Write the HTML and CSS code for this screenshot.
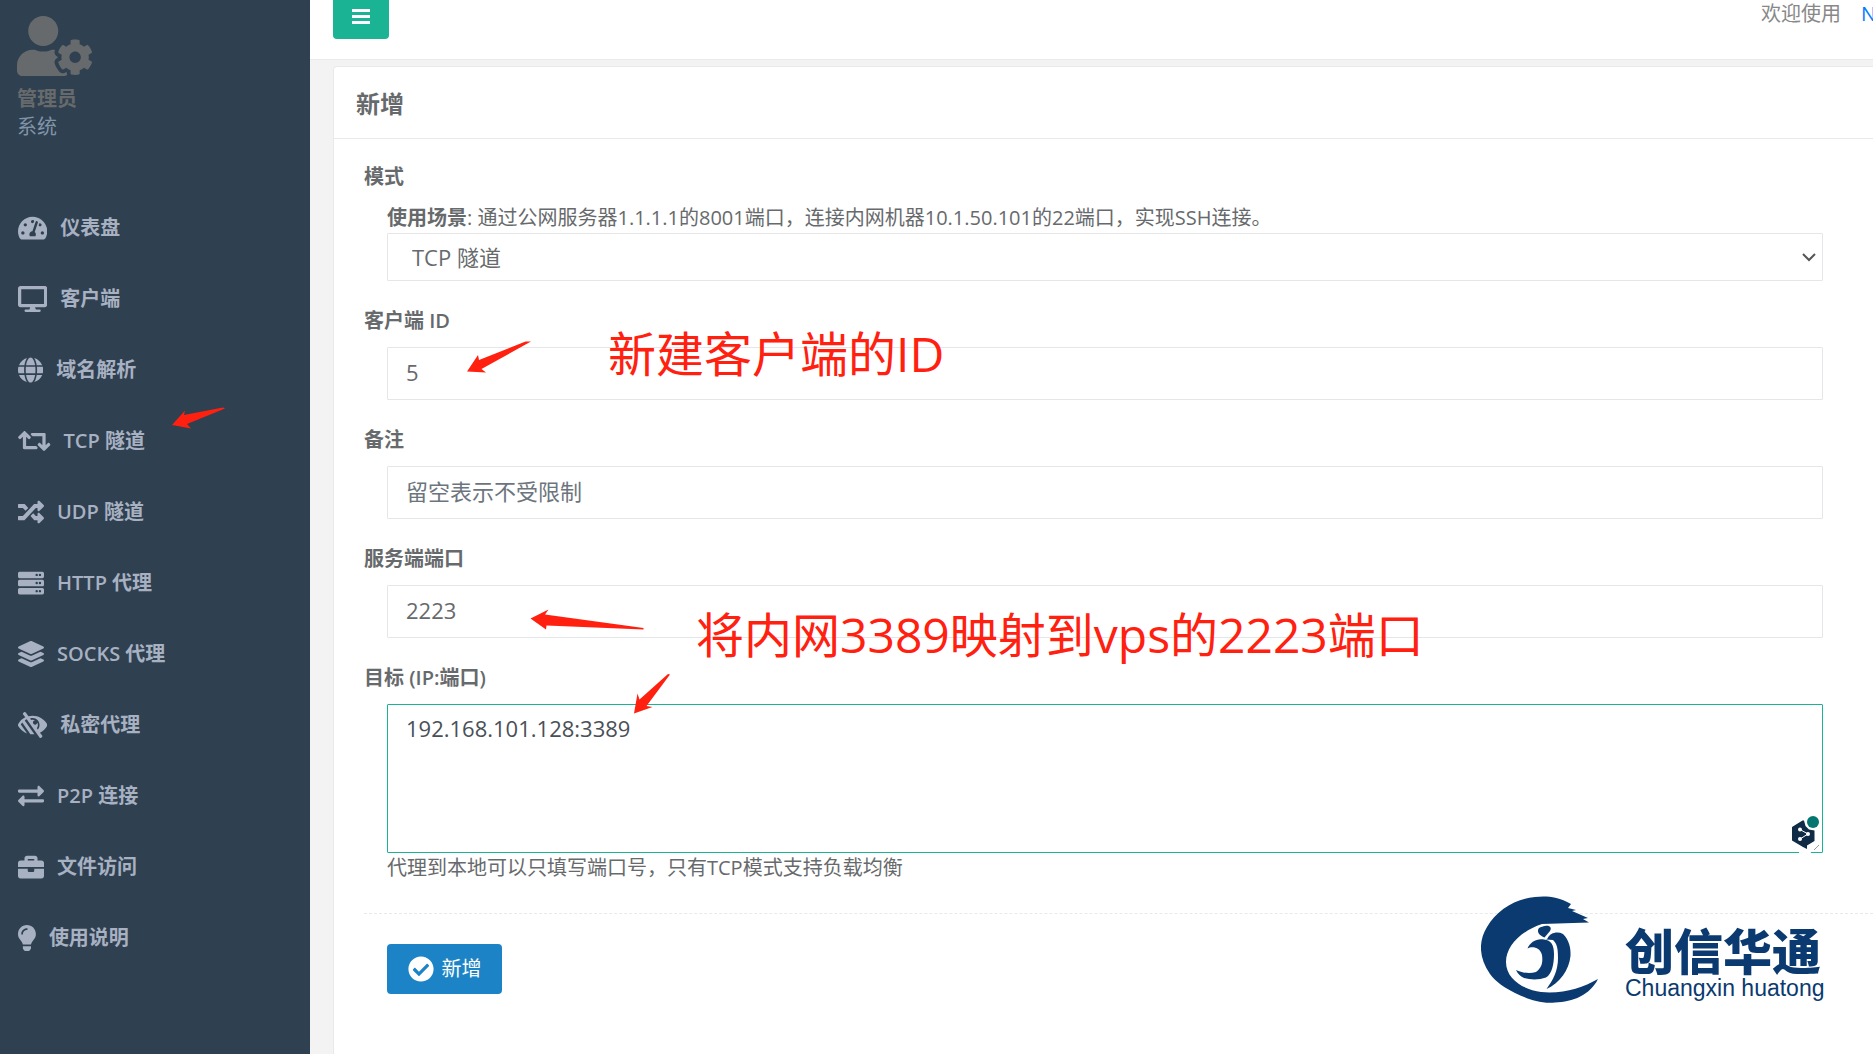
FILE: index.html
```html
<!DOCTYPE html>
<html lang="zh-CN">
<head>
<meta charset="utf-8">
<title>新增</title>
<link rel="stylesheet" href="styles.css">
</head>
<body>
<div class="layout">
  <nav class="sidebar">
    <header class="profile">
      <svg class="avatar" viewBox="0 0 640 512"><path d="M610.5 373.3c2.6-14.1 2.6-28.5 0-42.6l25.8-14.9c3-1.7 4.3-5.2 3.3-8.5-6.7-21.6-18.2-41.2-33.2-57.4-2.3-2.5-6-3.1-9-1.4l-25.8 14.9c-10.9-9.3-23.4-16.5-36.9-21.3v-29.8c0-3.4-2.4-6.4-5.7-7.1-22.3-5-45-4.8-66.2 0-3.3.7-5.7 3.7-5.7 7.1v29.8c-13.5 4.8-26 12-36.9 21.3l-25.8-14.9c-2.9-1.7-6.7-1.1-9 1.4-15 16.2-26.5 35.8-33.2 57.4-1 3.3.4 6.8 3.3 8.5l25.8 14.9c-2.6 14.1-2.6 28.5 0 42.6l-25.8 14.9c-3 1.7-4.3 5.2-3.3 8.5 6.7 21.6 18.2 41.1 33.2 57.4 2.3 2.5 6 3.1 9 1.4l25.8-14.9c10.9 9.3 23.4 16.5 36.9 21.3v29.8c0 3.4 2.4 6.4 5.7 7.1 22.3 5 45 4.8 66.2 0 3.3-.7 5.7-3.7 5.7-7.1v-29.8c13.5-4.8 26-12 36.9-21.3l25.8 14.9c2.9 1.7 6.7 1.1 9-1.4 15-16.2 26.5-35.8 33.2-57.4 1-3.3-.4-6.8-3.3-8.5l-25.8-14.9zM496 400.5c-26.8 0-48.5-21.8-48.5-48.5s21.8-48.5 48.5-48.5 48.5 21.8 48.5 48.5-21.7 48.5-48.5 48.5zM224 256c70.7 0 128-57.3 128-128S294.7 0 224 0 96 57.3 96 128s57.3 128 128 128zm201.2 226.5c-2.3-1.2-4.6-2.6-6.8-3.9l-7.9 4.6c-6 3.4-12.8 5.3-19.6 5.3-10.9 0-21.4-4.6-28.9-12.6-18.3-19.8-32.3-43.9-40.2-69.6-5.5-17.7 1.9-36.4 17.9-45.7l7.9-4.6c-.1-2.6-.1-5.2 0-7.8l-7.9-4.6c-16-9.2-23.4-28-17.9-45.7.9-2.9 2.2-5.8 3.2-8.7-3.8-.3-7.5-1.2-11.4-1.2h-16.7c-22.2 10.2-46.9 16-72.9 16s-50.6-5.8-72.9-16h-16.7C60.2 288 0 348.2 0 422.4V464c0 26.5 21.5 48 48 48h352c10.1 0 19.5-3.2 27.2-8.5-1.2-3.8-2-7.7-2-11.8v-9.2z"/></svg>
      <strong class="profile-name">管理员</strong>
      <span class="profile-role">系统</span>
    </header>
    <ul class="menu">
      <li><a href="#"><svg class="icon" viewBox="0 0 576 512"><path d="M288 32C128.94 32 0 160.94 0 320c0 52.8 14.25 102.26 39.06 144.8 5.61 9.62 16.3 15.2 27.44 15.2h443c11.14 0 21.83-5.58 27.44-15.2C561.75 422.26 576 372.8 576 320c0-159.06-128.94-288-288-288zm0 64c14.71 0 26.58 10.13 30.32 23.65-1.11 2.26-2.64 4.23-3.45 6.67l-9.22 27.67c-5.13 3.49-10.97 6.01-17.64 6.01-17.67 0-32-14.33-32-32S270.33 96 288 96zM96 384c-17.67 0-32-14.33-32-32s14.33-32 32-32 32 14.33 32 32-14.33 32-32 32zm48-160c-17.67 0-32-14.33-32-32s14.33-32 32-32 32 14.33 32 32-14.33 32-32 32zm246.77-72.41l-61.33 184C343.13 347.33 352 364.54 352 384c0 11.72-3.38 22.55-8.88 32H232.88c-5.5-9.45-8.88-20.28-8.88-32 0-33.94 26.5-61.43 59.9-63.59l61.34-184.01c4.17-12.56 17.73-19.45 30.36-15.17 12.57 4.19 19.35 17.79 15.17 30.36zm14.66 57.2l15.52-46.55c3.47-1.29 7.13-2.23 11.05-2.23 17.67 0 32 14.33 32 32s-14.33 32-32 32c-11.38-.01-20.89-6.28-26.57-15.22zM480 384c-17.67 0-32-14.33-32-32s14.33-32 32-32 32 14.33 32 32-14.33 32-32 32z"/></svg><span>仪表盘</span></a></li>
      <li><a href="#"><svg class="icon" viewBox="0 0 576 512"><path d="M528 0H48C21.5 0 0 21.5 0 48v320c0 26.5 21.5 48 48 48h192l-16 48h-72c-13.3 0-24 10.7-24 24s10.7 24 24 24h272c13.3 0 24-10.7 24-24s-10.7-24-24-24h-72l-16-48h192c26.5 0 48-21.5 48-48V48c0-26.5-21.5-48-48-48zm-16 352H64V64h448v288z"/></svg><span>客户端</span></a></li>
      <li><a href="#"><svg class="icon" viewBox="0 0 496 512"><path d="M336.5 160C322 70.7 287.8 8 248 8s-74 62.7-88.5 152h177zM152 256c0 22.2 1.2 43.5 3.3 64h185.3c2.1-20.5 3.3-41.8 3.3-64s-1.2-43.5-3.3-64H155.3c-2.1 20.5-3.3 41.8-3.3 64zm324.7-96c-28.6-67.9-86.5-120.4-158-141.6 24.4 33.8 41.2 84.7 50 141.6h108zM177.2 18.4C105.8 39.6 47.8 92.1 19.3 160h108c8.7-56.9 25.5-107.8 49.9-141.6zM487.4 192H372.7c2.1 21 3.3 42.5 3.3 64s-1.2 43-3.3 64h114.6c5.5-20.5 8.6-41.8 8.6-64s-3.1-43.5-8.5-64zM120 256c0-21.5 1.2-43 3.3-64H8.6C3.2 212.5 0 233.8 0 256s3.2 43.5 8.6 64h114.6c-2-21-3.2-42.5-3.2-64zm39.5 96c14.5 89.3 48.7 152 88.5 152s74-62.7 88.5-152h-177zm159.3 141.6c71.4-21.2 129.4-73.7 158-141.6h-108c-8.8 56.9-25.6 107.8-50 141.6zM19.3 352c28.6 67.9 86.5 120.4 158 141.6-24.4-33.8-41.2-84.7-50-141.6h-108z"/></svg><span>域名解析</span></a></li>
      <li><a href="#"><svg class="icon" viewBox="0 0 640 512"><path d="M629.657 343.598L528.971 444.284c-9.373 9.372-24.568 9.372-33.941 0L394.343 343.598c-9.373-9.373-9.373-24.569 0-33.941l10.823-10.823c9.562-9.562 25.133-9.34 34.419.492L480 342.118V160H292.451a24.005 24.005 0 0 1-16.971-7.029l-16-16C244.361 121.851 255.069 96 276.451 96H520c13.255 0 24 10.745 24 24v222.118l40.416-42.792c9.285-9.831 24.856-10.054 34.419-.492l10.823 10.823c9.372 9.372 9.372 24.569-.001 33.941zm-265.138 15.431A23.999 23.999 0 0 0 347.548 352H160V169.881l40.416 42.792c9.286 9.831 24.856 10.054 34.419.491l10.822-10.822c9.373-9.373 9.373-24.569 0-33.941L144.971 67.716c-9.373-9.373-24.569-9.373-33.941 0L10.343 168.402c-9.373 9.373-9.373 24.569 0 33.941l10.822 10.822c9.562 9.562 25.133 9.34 34.419-.491L96 169.881V392c0 13.255 10.745 24 24 24h243.549c21.382 0 32.09-25.851 16.971-40.971l-16.001-16z"/></svg><span>TCP 隧道</span></a></li>
      <li><a href="#"><svg class="icon" viewBox="0 0 512 512"><path d="M504.971 359.029c9.373 9.373 9.373 24.569 0 33.941l-80 79.984c-15.01 15.01-40.971 4.49-40.971-16.971V416h-58.785a12.004 12.004 0 0 1-8.773-3.812l-70.556-75.596 53.333-57.143L352 336h32v-39.981c0-21.438 25.943-31.998 40.971-16.971l80 79.981zM12 176h84l52.781 56.551 53.333-57.143-70.556-75.596A11.999 11.999 0 0 0 122.785 96H12c-6.627 0-12 5.373-12 12v56c0 6.627 5.373 12 12 12zm372 0v39.984c0 21.46 25.961 31.98 40.971 16.971l80-79.984c9.373-9.373 9.373-24.569 0-33.941l-80-79.981C409.943 24.021 384 34.582 384 56.019V96h-58.785a12.004 12.004 0 0 0-8.773 3.812L96 336H12c-6.627 0-12 5.373-12 12v56c0 6.627 5.373 12 12 12h110.785c3.326 0 6.503-1.381 8.773-3.812L352 176h32z"/></svg><span>UDP 隧道</span></a></li>
      <li><a href="#"><svg class="icon" viewBox="0 0 512 512"><path fill-rule="evenodd" d="M480 160H32c-17.673 0-32-14.327-32-32V64c0-17.673 14.327-32 32-32h448c17.673 0 32 14.327 32 32v64c0 17.673-14.327 32-32 32zm-48-88a24 24 0 1 0 0 48a24 24 0 1 0 0-48zm-64 0a24 24 0 1 0 0 48a24 24 0 1 0 0-48zM480 320H32c-17.673 0-32-14.327-32-32v-64c0-17.673 14.327-32 32-32h448c17.673 0 32 14.327 32 32v64c0 17.673-14.327 32-32 32zm-48-88a24 24 0 1 0 0 48a24 24 0 1 0 0-48zm-64 0a24 24 0 1 0 0 48a24 24 0 1 0 0-48zM480 480H32c-17.673 0-32-14.327-32-32v-64c0-17.673 14.327-32 32-32h448c17.673 0 32 14.327 32 32v64c0 17.673-14.327 32-32 32zm-48-88a24 24 0 1 0 0 48a24 24 0 1 0 0-48zm-64 0a24 24 0 1 0 0 48a24 24 0 1 0 0-48z"/></svg><span>HTTP 代理</span></a></li>
      <li><a href="#"><svg class="icon" viewBox="0 0 512 512"><path d="M12.41 148.02l232.94 105.67c6.8 3.09 14.49 3.09 21.29 0l232.94-105.67c16.55-7.51 16.55-32.52 0-40.03L266.65 2.31a25.607 25.607 0 0 0-21.29 0L12.41 107.98c-16.55 7.51-16.55 32.53 0 40.04zm487.18 88.28l-58.09-26.33-161.64 73.27c-7.56 3.43-15.59 5.17-23.86 5.17s-16.29-1.74-23.86-5.17L70.51 209.97l-58.1 26.33c-16.55 7.5-16.55 32.5 0 40l232.94 105.59c6.8 3.08 14.49 3.08 21.29 0L499.59 276.3c16.55-7.5 16.55-32.5 0-40zm0 127.8l-57.87-26.23-161.86 73.37c-7.56 3.43-15.59 5.17-23.86 5.17s-16.29-1.74-23.86-5.17L70.29 337.87 12.41 364.1c-16.55 7.5-16.55 32.5 0 40l232.94 105.59c6.8 3.08 14.49 3.08 21.29 0L499.59 404.1c16.55-7.5 16.55-32.5 0-40z"/></svg><span>SOCKS 代理</span></a></li>
      <li><a href="#"><svg class="icon" viewBox="0 0 576 512"><path d="M569.344 231.631C512.96 135.949 407.81 72 288 72c-28.468 0-56.102 3.619-82.451 10.415L152.778 10.24c-7.601-10.858-22.564-13.5-33.423-5.9l-13.114 9.178c-10.86 7.601-13.502 22.566-5.9 33.426l43.131 58.395C89.449 131.73 40.228 174.683 6.682 231.581c-.01.017-.023.033-.034.05-8.765 14.875-8.964 33.528 0 48.739 38.5 65.332 99.742 115.862 172.859 141.349L55.316 244.302A272.194 272.194 0 0 1 83.61 208.39l119.4 170.58h.01l40.63 58.04a330.055 330.055 0 0 0 78.94 1.17l-189.98-271.4a277.628 277.628 0 0 1 38.777-21.563l251.836 356.544c7.601 10.858 22.564 13.499 33.423 5.9l13.114-9.178c10.86-7.601 13.502-22.567 5.9-33.426l-43.12-58.377-.007-.009c57.161-27.978 104.835-72.04 136.81-126.301a47.938 47.938 0 0 0 .001-48.739zM390.026 345.94l-19.066-27.23c24.682-32.567 27.711-76.353 8.8-111.68v.03c0 23.65-19.17 42.82-42.82 42.82-23.828 0-42.82-19.349-42.82-42.82 0-23.65 19.17-42.82 42.82-42.82h.03c-24.75-13.249-53.522-15.643-79.51-7.68l-19.068-27.237C253.758 123.306 270.488 120 288 120c75.162 0 136 60.826 136 136 0 34.504-12.833 65.975-33.974 89.94z"/></svg><span>私密代理</span></a></li>
      <li><a href="#"><svg class="icon" viewBox="0 0 512 512"><path d="M0 168v-16c0-13.255 10.745-24 24-24h360V80c0-21.367 25.899-32.042 40.971-16.971l80 80c9.372 9.373 9.372 24.569 0 33.941l-80 80C409.956 271.982 384 261.456 384 240v-48H24c-13.255 0-24-10.745-24-24zm488 152H128v-48c0-21.314-25.862-32.08-40.971-16.971l-80 80c-9.372 9.373-9.372 24.569 0 33.941l80 80C102.057 463.997 128 453.437 128 432v-48h360c13.255 0 24-10.745 24-24v-16c0-13.255-10.745-24-24-24z"/></svg><span>P2P 连接</span></a></li>
      <li><a href="#"><svg class="icon" viewBox="0 0 512 512"><path d="M320 336c0 8.84-7.16 16-16 16h-96c-8.84 0-16-7.16-16-16v-48H0v144c0 25.6 22.4 48 48 48h416c25.6 0 48-22.4 48-48V288H320v48zm144-208h-80V80c0-25.6-22.4-48-48-48H176c-25.6 0-48 22.4-48 48v48H48c-25.6 0-48 22.4-48 48v80h512v-80c0-25.6-22.4-48-48-48zm-144 0H192V96h128v32z"/></svg><span>文件访问</span></a></li>
      <li><a href="#"><svg class="icon" viewBox="0 0 352 512"><path d="M96.06 454.35c.01 6.29 1.87 12.45 5.36 17.69l17.09 25.69a31.99 31.99 0 0 0 26.64 14.28h61.71a31.99 31.99 0 0 0 26.64-14.28l17.09-25.69a31.989 31.989 0 0 0 5.36-17.69l.04-38.35H96.01l.05 38.35zM0 176c0 44.37 16.45 84.85 43.56 115.78 16.52 18.85 42.36 58.23 52.21 91.45.04.26.07.52.11.78h160.24c.04-.26.07-.51.11-.78 9.85-33.22 35.69-72.6 52.21-91.45C335.55 260.85 352 220.37 352 176 352 78.61 272.91-.3 175.45 0 73.44.31 0 82.97 0 176zm176-80c-44.11 0-80 35.89-80 80 0 8.84-7.16 16-16 16s-16-7.16-16-16c0-61.76 50.24-112 112-112 8.84 0 16 7.16 16 16s-7.16 16-16 16z"/></svg><span>使用说明</span></a></li>
    </ul>
  </nav>

  <main class="page">
    <div class="topbar">
      <button class="toggle" type="button" aria-label="菜单"><svg class="bars" viewBox="0 0 18 18"><path d="M0 1h18v3H0zM0 7h18v3H0zM0 13h18v3H0z"/></svg></button>
      <div class="welcome"><span>欢迎使用</span><a href="#">N</a></div>
    </div>

    <section class="card">
      <h1 class="card-title">新增</h1>
      <form class="form">
        <div class="group">
          <label for="mode">模式</label>
          <div class="field">
            <p class="hint"><b>使用场景</b>: 通过公网服务器1.1.1.1的8001端口，连接内网机器10.1.50.101的22端口，实现SSH连接。</p>
            <div class="select-wrap">
              <select id="mode" class="control select"><option>TCP 隧道</option></select>
              <svg class="chevron" viewBox="0 0 14 9"><path d="M1 1l6 6 6-6"/></svg>
            </div>
          </div>
        </div>
        <div class="group">
          <label for="client">客户端 ID</label>
          <div class="field"><input id="client" class="control" type="text" value="5"></div>
        </div>
        <div class="group">
          <label for="remark">备注</label>
          <div class="field"><input id="remark" class="control" type="text" placeholder="留空表示不受限制"></div>
        </div>
        <div class="group">
          <label for="port">服务端端口</label>
          <div class="field"><input id="port" class="control" type="text" value="2223"></div>
        </div>
        <div class="group">
          <label for="target">目标 (IP:端口)</label>
          <div class="field">
            <div class="area-wrap">
              <textarea id="target" class="control area">192.168.101.128:3389</textarea>
              <svg class="helper" viewBox="0 0 32 38"><ellipse class="halo" cx="17" cy="37" rx="6" ry="3"/><path class="hex" d="M4 12 14.500 5.500 16 5.500 17.500 11 21 14.500 26.500 15.500V26L19 30.500V34L15 32 4 25.500z"/><path class="link" d="M12 14.500 20 19l-8 5"/><circle class="node" cx="12" cy="14.500" r="2"/><circle class="node" cx="20" cy="19" r="2"/><circle class="node" cx="12" cy="24" r="2"/><circle class="dot" cx="25" cy="7" r="6"/><path class="grip" d="M26 35l5-5"/></svg>
            </div>
            <p class="hint">代理到本地可以只填写端口号，只有TCP模式支持负载均衡</p>
          </div>
        </div>
        <div class="actions">
          <button class="submit" type="button"><svg class="check" viewBox="0 0 512 512"><path d="M504 256c0 136.967-111.033 248-248 248S8 392.967 8 256 119.033 8 256 8s248 111.033 248 248zM227.314 387.314l184-184c6.248-6.248 6.248-16.379 0-22.627l-22.627-22.627c-6.248-6.248-16.379-6.249-22.628 0L216 308.118l-70.059-70.059c-6.248-6.248-16.379-6.248-22.628 0l-22.627 22.627c-6.248 6.248-6.248 16.379 0 22.627l104 104c6.249 6.249 16.379 6.249 22.628.001z"/></svg><span>新增</span></button>
        </div>
      </form>
    </section>
  </main>
</div>

<svg class="arrows" width="700" height="740" viewBox="0 0 700 740">
  <path d="M172 425 185 410.500 184 415 223 407.500 225 408.500 187 424 191 428.500z"/>
  <path d="M467 371.500 478 355 479 360 525.500 341.500 531 341.500 481.500 369 486 372.500z"/>
  <path d="M530.500 618.500 548.500 609.500 545 614.500 643.500 628 643.500 629.500 546.500 625.500 546 629.500z"/>
  <path d="M634 713.500 637.500 693.500 639.500 699.500 668 674 670 674.500 646.500 706 652.500 707z"/>
</svg>
<p class="note note-client">新建客户端的ID</p>
<p class="note note-port">将内网3389映射到vps的2223端口</p>

<div class="brand">
  <svg class="brand-mark" viewBox="0 0 118 107"><path d="M54 1C64 0 76 0 90 8L87 12 95 14 91 15 107 22 102 23 108 26.500 61 28C40 35 25 50 25 66 25 84 44 94 60 96 82 98 101 92 117 83 109 99 92 106 74 106.500 58 108 45 102 34 97 24 92 15 86 9 78-2 62-3 46 6 31 16 14 34 3 54 1z"/><path d="M57 35C57 31 60 31 64 30 69 29 71 32 69 35L63.500 41.500C60 40 57 38 57 35z"/><path d="M66.500 42.500C69 37 76 35 82 38 88 44 90 52 89.500 60 88 74 79 87 65.500 93 72 84 77 75 77 62 77 52 76 48 72 44L65 43.500z"/><path d="M46.500 52.500C49 46 56 42 63 43.500 70 44 73 49 73 58 73 68 71 78 65 81.500 58 84 50 84 43 82 39 80 37 78 35 74 41 77 49 78 55 76 61 72 62 66 61 59 59 51 51 50 46.500 52.500z"/></svg>
  <div class="brand-text"><strong>创信华通</strong><span>Chuangxin huatong</span></div>
</div>
</body>
</html>
```
FILE: styles.css
```css
* { box-sizing: border-box; }
body {
  margin: 0;
  overflow: hidden;
  background: #f3f3f4;
  color: #676a6c;
  font: 20px/30px "Open Sans", "Noto Sans CJK SC", sans-serif;
}
p, ul, h1 { margin: 0; padding: 0; }
a { text-decoration: none; }

.layout { display: flex; min-height: 100vh; }

/* sidebar */
.sidebar { flex: 0 0 310px; background: #2f4050; }
.profile { display: flex; flex-direction: column; padding: 16px 17px 0; line-height: 28px; }
.avatar { width: 75px; height: 60px; margin-bottom: 9px; fill: #676a6c; }
.profile-name { font-weight: 700; }
.profile-role { color: #8095a8; }
.menu { list-style: none; padding-top: 51px; }
.menu a {
  display: flex;
  align-items: center;
  gap: 13px;
  height: 71px;
  padding-left: 18px;
  color: #a7b1c2;
  font-weight: 600;
}
.icon { height: 26px; fill: currentColor; }

/* main column */
.page { flex: 1; min-width: 0; display: flex; flex-direction: column; }
.topbar {
  display: flex;
  justify-content: space-between;
  height: 60px;
  margin-bottom: 6px;
  padding-left: 23px;
  background: #fff;
  border-bottom: 1px solid #e7eaec;
}
.toggle {
  display: flex;
  justify-content: center;
  width: 56px;
  height: 39px;
  padding: 8px 0 0;
  border: 0;
  border-radius: 0 0 4px 4px;
  background: #1ab394;
}
.bars { width: 18px; height: 18px; fill: #fff; }
.welcome {
  display: flex;
  gap: 20px;
  width: 112px;
  overflow: hidden;
  line-height: 28px;
  color: #888;
  white-space: nowrap;
}
.welcome a { color: #007bff; }

.card {
  flex: 1;
  margin-left: 23px;
  background: #fff;
  border: 1px solid #e7eaec;
  border-width: 1px 0 0 1px;
  border-radius: 4px 0 0 0;
}
.card-title {
  padding: 22px 22px 19px;
  border-bottom: 1px solid #e7eaec;
  font-size: 24px;
  line-height: 30px;
  font-weight: 700;
}
.form { padding: 23px 0 0 30px; }
.group { display: flex; flex-direction: column; gap: 11px; margin-bottom: 25px; }
.group label { font-weight: 600; }
.field { margin: 0 50px 0 23px; }
.hint b { font-weight: 700; }
.control {
  display: block;
  width: 100%;
  height: 53px;
  padding: 0 18px 3px;
  border: 1px solid #e5e6e7;
  border-radius: 1px;
  outline: 0;
  background: #fff;
  color: #676a6c;
  font: 400 22px/30px "Open Sans", "Noto Sans CJK SC", sans-serif;
}
.control::placeholder { color: #6c757d; opacity: 1; }
.select-wrap, .area-wrap { position: relative; }
.select { height: 48px; padding: 0 24px; appearance: none; }
.chevron {
  position: absolute;
  right: 7px;
  top: 20px;
  width: 14px;
  height: 9px;
  fill: none;
  stroke: #555;
  stroke-width: 2;
}
.area { height: 149px; padding: 8px 18px; border-color: #1ab394; color: #495057; resize: none; }
.helper { position: absolute; right: 3px; bottom: 0; width: 32px; height: 38px; }
.halo { fill: #fff; }
.hex { fill: #0f2b46; }
.link { fill: none; stroke: #fff; }
.grip { fill: none; stroke: #999; stroke-width: 1; }
.node { fill: #fff; }
.dot { fill: #04756f; }

.actions { margin-top: 30px; padding: 30px 23px; border-top: 1px dashed #e7eaec; }
.submit {
  display: flex;
  align-items: center;
  justify-content: center;
  gap: 8px;
  width: 115px;
  height: 50px;
  padding: 0;
  border: 0;
  border-radius: 4px;
  background: #1c84c6;
  color: #fff;
  font: 400 20px/30px "Open Sans", "Noto Sans CJK SC", sans-serif;
}
.check { width: 26px; height: 26px; fill: currentColor; }

/* annotations over the page */
.arrows { position: absolute; left: 0; top: 0; fill: #ff2010; pointer-events: none; }
.note {
  position: absolute;
  color: #ff2010;
  font-size: 48px;
  line-height: 60px;
  white-space: nowrap;
}
.note-client { left: 608px; top: 324px; }
.note-port { left: 696px; top: 605px; }

.brand {
  position: absolute;
  left: 1481px;
  top: 896px;
  display: flex;
  gap: 26px;
  color: #0a3a70;
}
.brand-mark { width: 118px; height: 107px; fill: currentColor; }
.brand-text { display: flex; flex-direction: column; padding-top: 32px; }
.brand-text strong { font-size: 49px; line-height: 46px; font-weight: 900; }
.brand-text span { font: 23px/28px "Liberation Sans", Arial, sans-serif; }
```
